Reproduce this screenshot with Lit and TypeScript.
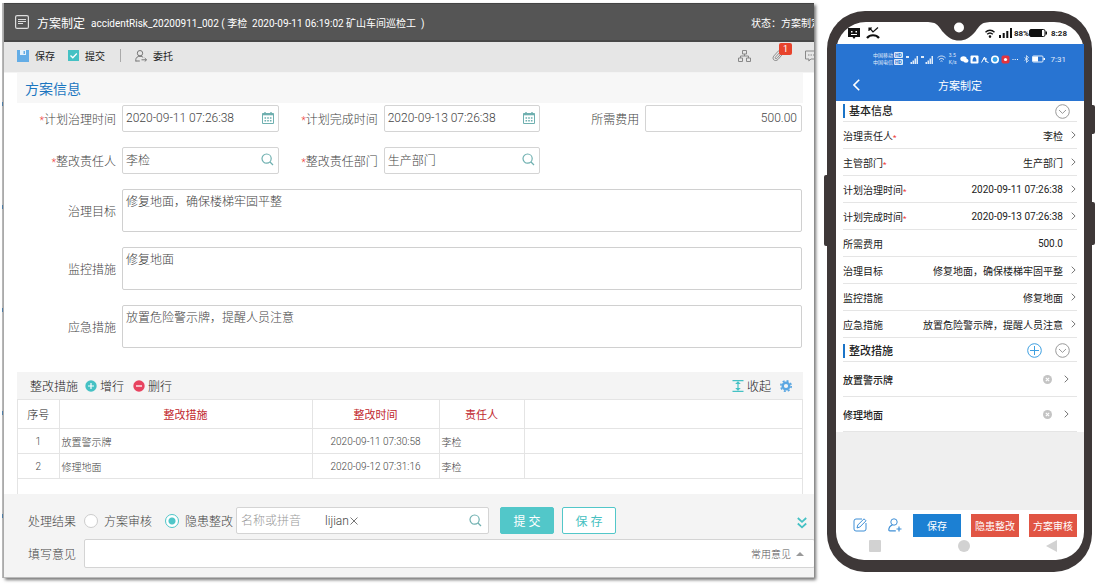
import { LitElement, html, css, svg } from "lit";
import { customElement, state } from "lit/decorators.js";

const base = css`
  * { box-sizing: border-box; }
  :host { display: block; font-family: Roboto, "Noto Sans CJK SC", sans-serif; }
  button, input, textarea { font: inherit; color: inherit; margin: 0; }
  button { border: 0; background: none; padding: 0; cursor: pointer; white-space: nowrap; }
  svg { display: block; flex: none; }
`;

const calendar = svg`<svg width="12" height="12" viewBox="0 0 12 12" fill="none" stroke="#6fb0b0">
  <path d="M.5 1.5h11v10H.5z"/><path d="M0 2.500h12" stroke-width="1.600"/><path d="M3 0v3M9 0v3" stroke-width="1.400"/>
  <path d="M2.500 6h7M2.500 8.700h7" stroke-width="1.400" stroke-dasharray="1.600 1.100"/></svg>`;
const search = svg`<svg width="13" height="13" viewBox="0 0 13 13" fill="none" stroke="#6fb0b0" stroke-width="1.200">
  <circle cx="5.600" cy="5.600" r="4.600"/><path d="M9 9l3 3"/></svg>`;
const chevron = svg`<svg width="5" height="8" viewBox="0 0 5 8" fill="none" stroke="#777"><path d="M.7.7L4.100 4 .7 7.300"/></svg>`;
const fold = svg`<svg width="15" height="15" viewBox="0 0 15 15" fill="none" stroke="#999"><circle cx="7.500" cy="7.500" r="6.800"/><path d="M4 6l3.500 3.400L11 6"/></svg>`;

@customElement("risk-form")
class RiskForm extends LitElement {
  @state() private result = "rectify";

  private rows = [
    { item: "放置警示牌", time: "2020-09-11 07:30:58", owner: "李检" },
    { item: "修理地面", time: "2020-09-12 07:31:16", owner: "李检" },
  ];

  static styles = [base, css`
    :host { font-size: 12px; font-weight: 300; color: #444; padding-left: 1px;
      background: linear-gradient(#bbb 99px, #4d7ea8 99px) 0 0 / 1px 103px repeat-y; }
    .window { border-left: 1px solid #aaa; background: #fff; overflow: hidden; }
    .shadow { box-shadow: 2px 2px 3px #777; }
    .header { display: flex; align-items: center; height: 39px; padding-left: 11px; background: #555; color: #fff;
      border-top: 1px solid #444; border-bottom: 2px solid #484848; white-space: nowrap; font-weight: 400; }
    .title { margin: 0 6px 0 8px; font-size: 12px; font-weight: 400; }
    .meta { font-size: 10px; white-space: pre; }
    .status { margin: 0 -7px 0 auto; font-size: 10px; }
    .toolbar { display: flex; align-items: center; height: 31px; padding: 0 0 3px 13px; background: #e6e6e6;
      font-size: 10px; font-weight: 400; color: #222; border-bottom: 1px solid #f4f4f4; }
    .tool { display: flex; align-items: center; gap: 6px; margin-right: 13px; }
    .divider { width: 1px; height: 13px; margin: 0 14px 0 2px; background: #aaa; }
    .right { display: flex; align-items: center; gap: 21px; margin: 0 -4px 0 auto; }
    .clip { position: relative; }
    .badge { position: absolute; left: 7px; top: -6px; width: 13px; height: 12px; border-radius: 2px; background: #e8432c;
      color: #fff; font-size: 9px; line-height: 12px; text-align: center; }
    .section { margin: 0 11px 2px 13px; padding-left: 8px; height: 30px; line-height: 32px; background: #f7f7f7;
      font-size: 14px; font-weight: 400; color: #1b76c0; }
    .grid { display: grid; grid-template-columns: repeat(3, 1fr); gap: 15px 0; padding: 0 12px 0 13px; }
    .field { display: grid; grid-template-columns: 99px 1fr; gap: 6px; align-items: center; }
    .field > label { text-align: right; white-space: nowrap; }
    .wide { grid-column: 1 / -1; }
    .req { color: #e33; font-size: 10px; }
    .box { display: flex; align-items: center; height: 27px; min-width: 0; border: 1px solid #d4d4d4; border-radius: 2px;
      background: #fff; padding: 0 4px; }
    .box input { flex: 1; min-width: 0; border: 0; outline: 0; padding: 0; background: none; }
    .box.pad { padding: 0 4px 2px 3px; }
    .num { text-align: right; }
    textarea { height: 43px; width: 100%; border: 1px solid #d0d0d0; border-radius: 2px; padding: 3px 3px; line-height: 18px;
      resize: none; outline: 0; display: block; }
    .bar { display: flex; align-items: center; height: 27px; margin: 24px 11px 0 13px; padding: 0 11px 0 13px; background: #f4f4f4; color: #222; }
    .bar h2 { margin: 0 7px 0 0; font-size: 12px; font-weight: 300; }
    .act { display: flex; align-items: center; gap: 3px; margin-right: 9px; }
    .end { margin-left: auto; }
    .list { margin: 0 11px 0 13px; border: 1px solid #e4e4e4; border-width: 0 1px; padding-bottom: 15px; }
    table { width: 100%; border-collapse: collapse; table-layout: fixed; font-size: 10px; }
    th, td { height: 25px; padding: 0 2px; border: 1px solid #e4e4e4; text-align: left; font-weight: 300; }
    tr > :first-child { border-left: 0; text-align: center; }
    tr > :last-child { border-right: 0; }
    th { height: 29px; font-size: 11px; font-weight: 400; text-align: center; color: #c1272d; }
    th.idx { color: #222; font-weight: 300; }
    td.time { text-align: center; }
    .idx { width: 41px; } .c1 { width: 253px; } .c2 { width: 127px; } .c3 { width: 85px; }
    .footer { background: #f4f4f4; padding: 13px 0 9px 24px; display: grid; gap: 5px; border-bottom: 1px solid #bbb; }
    .line { display: flex; align-items: center; white-space: nowrap; }
    .lead { width: 48px; margin-right: 8px; }
    .radio { display: flex; align-items: center; gap: 6px; margin-right: 13px; }
    .radio input { appearance: none; width: 14px; height: 14px; border: 1px solid #ccc; border-radius: 50%; background: #fff; }
    .radio input:checked { border-color: #4fc6c8; background: radial-gradient(#4fc6c8 3px, #fff 4px); }
    .radio.last { margin-right: 3px; }
    .who { width: 253px; margin-right: 11px; padding-right: 6px; }
    .who input { flex: 0 0 84px; }
    .who input::placeholder { color: #999; opacity: 1; }
    .tag { flex: 1; display: flex; align-items: center; gap: 1px; }
    .btn { width: 54px; height: 27px; margin-right: 8px; border: 1px solid #52c7c9; border-radius: 2px; color: #46bfc1; background: #fff; font-weight: 400; }
    .btn.primary { background: #52c7c9; color: #fff; }
    .more { margin: 5px 7px 0 auto; }
    .comment { flex: 1; height: 29px; margin-right: -1px; padding-right: 10px; }
    .common { display: flex; align-items: center; gap: 5px; font-size: 10px; color: #555; }
  `];

  private field(id: string, label: string, value: string, icon: unknown, required = true) {
    return html`<div class="field">
      <label for=${id}>${required ? html`<span class="req">*</span>` : ""}${label}</label>
      <div class="box pad"><input id=${id} class=${icon ? "" : "num"} .value=${value} />${icon}</div>
    </div>`;
  }

  private area(id: string, label: string, value: string) {
    return html`<div class="field wide"><label for=${id}>${label}</label><textarea id=${id} .value=${value}></textarea></div>`;
  }

  render() {
    return html`<div class="shadow"><div class="window">
      <header class="header">
        <svg width="14" height="14" viewBox="0 0 14 14" fill="none" stroke="#ddd"><rect x=".6" y=".6" width="12.800" height="12.800" rx="1.500" stroke-width="1.200"/><path d="M3 4.500h8M3 6.500h8M3 8.500h5"/></svg>
        <h1 class="title">方案制定</h1>
        <span class="meta">accidentRisk_20200911_002 ( 李检  2020-09-11 06:19:02 矿山车间巡检工  )</span>
        <span class="status">状态：方案制定</span>
      </header>
      <nav class="toolbar">
        <button class="tool"><svg width="12" height="12" viewBox="0 0 12 12"><path d="M0 0h12v12H0z" fill="#64ade6"/><path d="M3 0h6v5H3z" fill="#e6f2fb"/><path d="M6.500 1h1.500v3H6.500z" fill="#64ade6"/></svg>保存</button>
        <button class="tool"><svg width="11" height="11" viewBox="0 0 11 11"><path d="M0 0h11v11H0z" fill="#45c1c4"/><path d="M2.500 5.500l2.300 2.300L8.800 3.500" fill="none" stroke="#fff" stroke-width="1.300"/></svg>提交</button>
        <span class="divider"></span>
        <button class="tool"><svg width="12" height="12" viewBox="0 0 12 12" fill="none" stroke="#777"><circle cx="5" cy="3.200" r="2.700"/><path d="M.8 11.500V9.500C1 7.500 2.500 6.300 5 6.300c1.500 0 2.500.4 3.200 1M.8 11h4M6.500 9.800h5M9.700 8l1.800 1.800-1.800 1.800"/></svg>委托</button>
        <div class="right">
          <svg width="13" height="12" viewBox="0 0 13 12" fill="none" stroke="#888"><path d="M4.500.5h4v3.500h-4zM.5 8h4v3.500h-4zM8.500 8h4v3.500h-4zM6.500 4v2M2.500 8V6h8v2"/></svg>
          <div class="clip">
            <svg width="12" height="13" viewBox="0 0 13 13" fill="none" stroke="#888"><path d="M11.500 5L6.500 10.800C5.200 12.300 3 12.300 1.900 11.200.8 10 .9 8.300 2 7l4.800-5.300C7.700.8 9.100.8 9.900 1.600c.8.800.7 2 0 2.900L5.300 9.600c-.5.5-1.200.5-1.600.1-.4-.4-.3-1 .1-1.500L8 3.600"/></svg>
            <span class="badge">1</span>
          </div>
          <svg width="13" height="12" viewBox="0 0 13 12" fill="none" stroke="#888"><path d="M.5 1h12v8H6l-2.200 2L4 9H.5z"/><path d="M3 5h7" stroke-dasharray="1.500 1"/></svg>
        </div>
      </nav>
      <div class="section">方案信息</div>
      <form class="grid">
        ${this.field("start", "计划治理时间", "2020-09-11 07:26:38", calendar)}
        ${this.field("finish", "计划完成时间", "2020-09-13 07:26:38", calendar)}
        ${this.field("cost", "所需费用", "500.00", "", false)}
        ${this.field("owner", "整改责任人", "李检", search)}
        ${this.field("dept", "整改责任部门", "生产部门", search)}
        ${this.area("goal", "治理目标", "修复地面，确保楼梯牢固平整")}
        ${this.area("monitor", "监控措施", "修复地面")}
        ${this.area("urgent", "应急措施", "放置危险警示牌，提醒人员注意")}
      </form>
      <div class="bar">
        <h2>整改措施</h2>
        <button class="act"><svg width="12" height="12" viewBox="0 0 12 12"><circle cx="6" cy="6" r="5.700" fill="#45c1c4"/><path d="M3 6h6M6 3v6" stroke="#fff" stroke-width="1.200"/></svg>增行</button>
        <button class="act"><svg width="12" height="12" viewBox="0 0 12 12"><circle cx="6" cy="6" r="5.700" fill="#e8435f"/><path d="M3 6h6" stroke="#fff" stroke-width="1.300"/></svg>删行</button>
        <button class="act end"><svg width="12" height="12" viewBox="0 0 12 12" fill="#45c1c4"><path d="M.5 0h11v1.200H.5zM.5 10.800h11V12H.5zM6 1.200L8.800 4H6.600v4h2.200L6 10.800 3.200 8h2.200V4H3.200z"/></svg>收起</button>
        <button aria-label="设置"><svg width="12" height="12" viewBox="0 0 12 12" fill="none" stroke="#5ba7e2"><circle cx="6" cy="6" r="3.300" stroke-width="2.400"/><circle cx="6" cy="6" r="5.200" stroke-width="1.600" stroke-dasharray="2.040 2.040"/></svg></button>
      </div>
      <div class="list">
        <table>
          <thead><tr><th class="idx">序号</th><th class="c1">整改措施</th><th class="c2">整改时间</th><th class="c3">责任人</th><th></th></tr></thead>
          <tbody>${this.rows.map((r, i) => html`<tr><td>${i + 1}</td><td>${r.item}</td><td class="time">${r.time}</td><td>${r.owner}</td><td></td></tr>`)}</tbody>
        </table>
      </div>
      <footer class="footer">
        <div class="line">
          <span class="lead">处理结果</span>
          <label class="radio"><input type="radio" name="result" .checked=${this.result === "review"} @change=${() => (this.result = "review")} />方案审核</label>
          <label class="radio last"><input type="radio" name="result" .checked=${this.result === "rectify"} @change=${() => (this.result = "rectify")} />隐患整改</label>
          <div class="box who"><input aria-label="名称或拼音" placeholder="名称或拼音" />
            <span class="tag">lijian<svg width="8" height="8" viewBox="0 0 8 8" stroke="#777"><path d="M.5.5l7 7M7.500.5l-7 7"/></svg></span>${search}</div>
          <button class="btn primary">提 交</button>
          <button class="btn">保 存</button>
          <button class="more" aria-label="展开"><svg width="10" height="12" viewBox="0 0 10 12" fill="none" stroke="#45c1c4" stroke-width="1.800"><path d="M.8 1L5 4.800 9.200 1M.8 6.500L5 10.300l4.200-3.800"/></svg></button>
        </div>
        <div class="line">
          <label class="lead" for="opinion">填写意见</label>
          <div class="box comment"><input id="opinion" />
            <button class="common">常用意见<svg width="8" height="4" viewBox="0 0 8 4"><path d="M0 4l4-4 4 4z" fill="#999"/></svg></button></div>
        </div>
      </footer>
    </div></div>`;
  }
}

@customElement("risk-phone")
class RiskPhone extends LitElement {
  private fields: [string, string, boolean, boolean][] = [
    ["治理责任人", "李检", true, true],
    ["主管部门", "生产部门", true, true],
    ["计划治理时间", "2020-09-11 07:26:38", true, true],
    ["计划完成时间", "2020-09-13 07:26:38", true, true],
    ["所需费用", "500.0", false, false],
    ["治理目标", "修复地面，确保楼梯牢固平整", false, true],
    ["监控措施", "修复地面", false, true],
    ["应急措施", "放置危险警示牌，提醒人员注意", false, true],
  ];

  static styles = [base, css`
    :host { position: relative; font-size: 10px; color: #222; }
    .key { position: absolute; width: 6px; background: #3e3838; border-radius: 2px; }
    .k1 { left: -3px; top: 164px; height: 71px; }
    .k2 { right: -3px; top: 94px; height: 29px; }
    .k3 { right: -3px; top: 191px; height: 43px; }
    .case { position: relative; background: #3e3838; border-radius: 38px; padding: 11px 8px 12px 9px; }
    .glass { background: #fff; border-radius: 30px 30px 28px 28px; }
    .notch { position: absolute; left: 99px; top: 10px; }
    .device { display: flex; align-items: center; height: 22px; padding: 0 17px 0 12px; }
    .device svg { margin-right: 6px; }
    .device .net { margin: 0 4px 0 auto; }
    .device .bars { margin-right: 2px; }
    .pct { font-size: 8px; font-weight: 700; }
    .device .cell { margin-right: 4px; }
    .clock { font-size: 8px; font-weight: 700; }
    .top { background: #2874d2; color: #fff; height: 57px; }
    .apps { display: flex; align-items: center; height: 25px; padding: 5px 18px 0 37px; font-size: 5px; line-height: 7px; gap: 3px; white-space: nowrap; color: #e0ecfa; }
    .carrier b { background: #e0ecfa; color: #2874d2; border-radius: 1px; font-weight: 700; padding: 0 1px; margin-left: 1px; }
    .apps .now { margin-left: auto; font-size: 8px; }
    .nav { display: grid; grid-template-columns: 1fr auto 1fr; align-items: center; height: 31px; padding: 0 17px; font-size: 11px; }
    .nav h1 { margin: 0; font-size: 11px; font-weight: 400; }
    .content { padding: 0 7px; background: #fff; }
    .head { display: flex; align-items: center; gap: 13px; height: 24px; padding: 2px 7px 0 0; border-bottom: 1px solid #e5e5e5; }
    .head h2 { margin: 0 auto 0 0; padding: 2px 0 0 4px; border-left: 2px solid #1b74c8; font-size: 11px; line-height: 12px; font-weight: 500; }
    .head.first { height: 21px; padding-top: 0; }
    .row { display: flex; align-items: center; width: 100%; height: 27px; border-bottom: 1px solid #e5e5e5; text-align: left; }
    .name { flex: 1; }
    .req { color: #e33; font-size: 8px; }
    .arrow { width: 14px; padding-left: 8px; flex: none; }
    .item { display: flex; align-items: center; height: 35px; border-bottom: 1px solid #e5e5e5; padding-right: 8px; gap: 12px; font-weight: 500; }
    .item span { flex: 1; }
    .blank { height: 78px; background: #efefef; }
    .actions { display: flex; align-items: center; height: 30px; padding: 0 7px 0 17px; }
    .actions .edit { margin-right: 21px; }
    .actions .group { display: flex; gap: 10px; margin-left: auto; }
    .btn { width: 48px; height: 23px; background: #1c80d3; color: #fff; }
    .btn.red { background: #e15544; }
    .home { display: flex; justify-content: space-between; height: 20px; padding: 0 27px 0 33px; }
  `];

  render() {
    return html`
      <span class="key k1"></span><span class="key k2"></span><span class="key k3"></span>
      <div class="case"><div class="glass">
        <div class="device">
          <svg width="12" height="11" viewBox="0 0 12 11"><path d="M0 0h12v9H7.500L6 11 4.500 9H0z" fill="#111"/><path d="M3 3h1.500v1.500H3zM7.500 3H9v1.500H7.500zM3 6h6v1H3z" fill="#fff"/></svg>
          <svg width="14" height="12" viewBox="0 0 14 12" fill="none" stroke="#111"><path d="M3 .5V4M3 1h3M3.500 1l3.500 4L12 .5" stroke-width="1.200"/><path d="M1 11c3-3.700 9-3.700 12 0" stroke-width="2.200"/></svg>
          <svg class="net" width="10" height="9" viewBox="0 0 10 9" fill="none" stroke="#111" stroke-width="1.400"><path d="M.5 3.200c2.600-2.600 6.400-2.600 9 0M2.200 5.300c1.700-1.600 3.900-1.600 5.600 0"/><circle cx="5" cy="7.600" r=".6"/></svg>
          <svg class="bars" width="13" height="10" viewBox="0 0 13 10" fill="#111"><path d="M0 7h2v3H0zM3.700 5h2v5h-2zM7.300 3h2v7h-2zM11 0h2v10h-2z"/></svg>
          <span class="pct">88%</span>
          <svg class="cell" width="18" height="8" viewBox="0 0 18 8"><rect x=".5" y=".5" width="15.500" height="7" rx="1.500" fill="none" stroke="#111"/><path d="M1 1h12v6H1zM16.500 2.500H18v3h-1.500z" fill="#111"/></svg>
          <span class="clock">8:28</span>
        </div>
        <div class="top">
          <div class="apps">
            <div class="carrier">中国移动<b>HD</b><br />中国电信<b>HD</b></div>
            <svg width="28" height="9" viewBox="0 0 28 9" fill="#e0ecfa"><path d="M0 1h3v2H0zM4.500 7H6v2H4.500zM6.500 5.500H8V9H6.500zM8.500 3.500H10V9H8.500zM10.500 1H12v8h-1.500zM15 1h3v2h-3zM19.500 7H21v2h-1.500zM21.500 5.500H23V9h-1.500zM23.500 3.500H25V9h-1.500zM25.500 1H27v8h-1.500z"/></svg>
            <svg width="9" height="8" viewBox="0 0 9 8" fill="none" stroke="#e0ecfa"><path d="M.5 2.800c2.400-2.400 5.600-2.400 8 0M2 4.600c1.500-1.500 3.500-1.500 5 0M3.500 6.300c.6-.6 1.400-.6 2 0"/></svg>
            <div>3.5<br />K/s</div>
            <svg width="58" height="9" viewBox="0 0 58 9" fill="#fff"><ellipse cx="3.500" cy="3.800" rx="3.200" ry="2.600"/><ellipse cx="6" cy="5.700" rx="2.500" ry="2"/><rect x="10.500" y=".5" width="8" height="8" rx="1"/><path d="M12.500 6.500c0-6 4-6 4 0z" fill="#2874d2"/><path d="M21.500 7.500l3-5.500 1.500 4M25 6l3.500 1.500M23 4h4" fill="none" stroke="#fff"/><circle cx="35" cy="4.500" r="4"/><circle cx="35" cy="4.500" r="2.400" fill="#35a3e8"/><rect x="41.500" y=".5" width="8" height="8" rx="2" fill="#e2343f"/><circle cx="45.500" cy="4.500" r="1.600"/><path d="M52.500 4h1v1h-1zM54.700 4h1v1h-1zM57 4h1v1h-1z"/></svg>
            <svg class="now" width="21" height="8" viewBox="0 0 21 8"><path d="M.5 2.500l4 3-2 2v-7l2 2-4 3" fill="none" stroke="#e0ecfa" stroke-width=".8"/><rect x="8.500" y="1" width="10.500" height="6" rx="1" fill="none" stroke="#e0ecfa"/><path d="M9 1.500h5v5H9zM19.500 3H21v2h-1.500z" fill="#fff"/></svg>
            <span class="now">7:31</span>
          </div>
          <div class="nav">
            <button aria-label="返回"><svg width="7" height="12" viewBox="0 0 7 12" fill="none" stroke="#fff" stroke-width="1.600"><path d="M6.200.8L1 6l5.200 5.200"/></svg></button>
            <h1>方案制定</h1>
          </div>
        </div>
        <div class="content">
          <div class="head first"><h2>基本信息</h2>${fold}</div>
          ${this.fields.map(([name, value, required, link]) => html`<button class="row">
            <span class="name">${name}${required ? html`<span class="req">*</span>` : ""}</span>
            <span>${value}</span><span class="arrow">${link ? chevron : ""}</span></button>`)}
          <div class="head"><h2>整改措施</h2>
            <svg width="15" height="15" viewBox="0 0 15 15" fill="none" stroke="#3d9fe0"><circle cx="7.500" cy="7.500" r="6.800"/><path d="M3 7.500h9M7.500 3v9"/></svg>${fold}</div>
          ${["放置警示牌", "修理地面"].map((t) => html`<div class="item"><span>${t}</span>
            <svg width="9" height="9" viewBox="0 0 8 8"><circle cx="4" cy="4" r="4" fill="#c4c4c4"/><path d="M2.500 2.500l3 3M5.500 2.500l-3 3" stroke="#fff"/></svg>${chevron}</div>`)}
        </div>
        <div class="blank"></div>
        <div class="actions">
          <button class="edit" aria-label="编辑"><svg width="14" height="14" viewBox="0 0 14 14" fill="none" stroke="#3f8fd6"><path d="M9 1H3Q1 1 1 3v8q0 2 2 2h8q2 0 2-2V5"/><path d="M4 10l.8-3L11 .8l2 2L6.900 9z"/></svg></button>
          <button aria-label="添加人员"><svg width="14" height="14" viewBox="0 0 14 14" fill="none" stroke="#3f8fd6"><circle cx="6" cy="4" r="3.200"/><path d="M4.500 7C2 7.800.8 9.500.8 12q0 .8 1 .8h6M11 8.500v5M8.500 11h5" stroke-width="1.200"/></svg></button>
          <div class="group"><button class="btn">保存</button><button class="btn red">隐患整改</button><button class="btn red">方案审核</button></div>
        </div>
        <div class="home">
          <svg width="12" height="12"><rect width="12" height="12" rx="1" fill="#d2d2d2"/></svg>
          <svg width="12" height="12"><circle cx="6" cy="6" r="6" fill="#d2d2d2"/></svg>
          <svg width="11" height="12"><path d="M11 0v12L0 6z" fill="#d2d2d2"/></svg>
        </div>
      </div>
      <svg class="notch" width="66" height="20" viewBox="0 0 66 20"><path d="M0 0h66v1c-12 0-12 4-17 10-5 6-10 8.500-16 8.500S22 17 17 11C12 5 12 1 0 1z" fill="#3e3838"/><circle cx="33" cy="6.500" r="5" fill="#fff"/></svg>
      </div>`;
  }
}

@customElement("app-root")
class AppRoot extends LitElement {
  static styles = css`
    :host { display: grid; grid-template-columns: minmax(0, 1fr) 265px; gap: 13px; align-items: start;
      min-height: 100vh; box-sizing: border-box; padding: 3px 8px 0 2px; background: #fff; }
    risk-phone { margin-top: 8px; }
  `;
  render() {
    return html`<risk-form></risk-form><risk-phone></risk-phone>`;
  }
}
